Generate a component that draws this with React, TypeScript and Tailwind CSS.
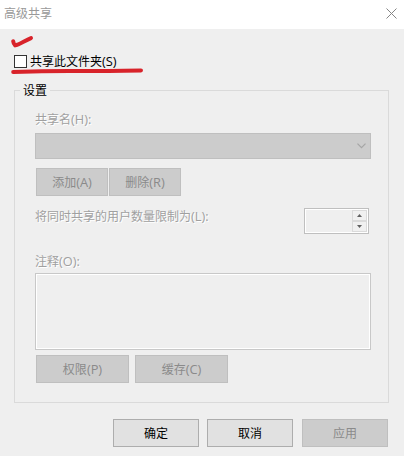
import { ReactNode } from "react";

// Caption followed by its access key, e.g. 添加(A)
const Caption = ({ text, hotkey }: { text: string; hotkey?: string }) => (
  <>
    {text}
    {hotkey && <span className="text-[12.8px] leading-none">{hotkey}</span>}
  </>
);

// Push button shared by the group box and the dialog footer
const DialogButton = ({
  text,
  hotkey,
  className,
  disabled = false,
}: {
  text: string;
  hotkey?: string;
  className: string;
  disabled?: boolean;
}) => (
  <button
    type="button"
    disabled={disabled}
    className={`h-7 shrink-0 border pt-px text-center leading-[25px] ${
      disabled
        ? "border-[#bfbfbf] bg-[#cccccc] text-[#8a8a8a]"
        : "border-[#adadad] bg-[#e1e1e1] text-black"
    } ${className}`}
  >
    <Caption text={text} hotkey={hotkey} />
  </button>
);

// Greyed out label with the light edge of a disabled control
const DisabledLabel = ({ children }: { children: ReactNode }) => (
  <span className="block h-4 leading-[18px] whitespace-nowrap text-[#a0a0a0] [text-shadow:1px_1px_0_#ffffff]">
    {children}
  </span>
);

export default function App() {
  return (
    <div className="h-[456px] w-[404px] overflow-hidden bg-[#efefef] font-['Open_Sans','Noto_Sans_CJK_SC',sans-serif] text-xs text-black">
      <header className="flex h-[29px] items-start justify-between bg-white pt-[6px] pr-[13px] pl-1">
        <h1 className="leading-4 text-[#999999]">高级共享</h1>
        <svg width="11" height="11" viewBox="0 0 11 11" className="mt-[2px] mr-[-6px]" fill="none" stroke="#858585">
          <path d="M.5.5l10 10M10.5.5l-10 10" />
        </svg>
      </header>

      <main className="flex flex-col pt-[25px] pr-[15px] pl-[14px]">
        <div className="relative h-[28px]">
          <label className="flex h-4 items-start gap-[3px] leading-4">
            <input
              type="checkbox"
              className="mt-px size-[13px] appearance-none border border-[#333333] bg-white"
            />
            <span>
              <Caption text="共享此文件夹" hotkey="(S)" />
            </span>
          </label>
          {/* Red pen marks over the checkbox row */}
          <svg
            width="140"
            height="44"
            viewBox="0 0 140 44"
            className="pointer-events-none absolute -top-[22px] -left-[4px]"
            fill="none"
            stroke="#d8232a"
            strokeLinecap="round"
            strokeLinejoin="round"
          >
            <path strokeWidth="4" d="M3.2 9.3c.2 1.6.8 3 1.9 4.1 3.9-.7 9.8-4.8 15.900-7.300" />
            <path strokeWidth="4" d="M3.200 40c21-.8 42-1.200 62-1.100 23 .1 45-.2 65.800-.5" />
          </svg>
        </div>

        <fieldset className="h-[321px] border border-[#dadada] pl-5">
          <legend className="-ml-[15px] h-4 px-[3px] leading-[17px]">设置</legend>

          <div className="mt-[13px]">
            <DisabledLabel>
              <Caption text="共享名" hotkey="(H):" />
            </DisabledLabel>
          </div>
          <div className="mt-[6px] flex h-[26px] w-[336px] items-center justify-end border border-[#bfbfbf] bg-[#cccccc] pr-1">
            <svg width="9" height="6" viewBox="0 0 9 6" fill="none" stroke="#a5a5a5" strokeWidth="1.2">
              <path d="M.5.7l4 4 4-4" />
            </svg>
          </div>
          <div className="mt-[9px] ml-px flex gap-px">
            <DialogButton disabled text="添加" hotkey="(A)" className="w-[72px]" />
            <DialogButton disabled text="删除" hotkey="(R)" className="w-[72px]" />
          </div>

          <div className="mt-3 flex h-[26px] w-[334px] justify-between">
            <DisabledLabel>
              <Caption text="将同时共享的用户数量限制为" hotkey="(L):" />
            </DisabledLabel>
            <div className="flex w-[65px] justify-end border border-[#bfbfbf] bg-[#efefef] p-px shadow-[inset_0_0_0_1px_#ffffff]">
              <div className="flex w-[15px] flex-col">
                <span className="flex h-[11px] items-center justify-center border border-[#dadada] bg-[#f0f0f0]">
                  <svg width="5" height="3" viewBox="0 0 5 3" fill="#606060">
                    <path d="M0 3L2.500 0 5 3z" />
                  </svg>
                </span>
                <span className="flex h-[11px] items-center justify-center border border-[#dadada] bg-[#f0f0f0]">
                  <svg width="5" height="3" viewBox="0 0 5 3" fill="#606060">
                    <path d="M0 0l2.500 3L5 0z" />
                  </svg>
                </span>
              </div>
            </div>
          </div>

          <div className="mt-[19px]">
            <DisabledLabel>
              <Caption text="注释" hotkey="(O):" />
            </DisabledLabel>
          </div>
          <textarea
            disabled
            className="mt-1 block h-[77px] w-[336px] resize-none border border-[#c8c8c8] bg-[#efefef] shadow-[inset_0_0_0_1px_#ffffff]"
          />
          <div className="mt-[5px] ml-px flex gap-[6px]">
            <DialogButton disabled text="权限" hotkey="(P)" className="w-[93px]" />
            <DialogButton disabled text="缓存" hotkey="(C)" className="w-[93px]" />
          </div>
        </fieldset>

        <footer className="mt-4 flex justify-end pr-px">
          <DialogButton text="确定" className="mr-2 w-[86px]" />
          <DialogButton text="取消" className="mr-[9px] w-[86px]" />
          <DialogButton disabled text="应用" className="w-[86px]" />
        </footer>
      </main>
    </div>
  );
}
